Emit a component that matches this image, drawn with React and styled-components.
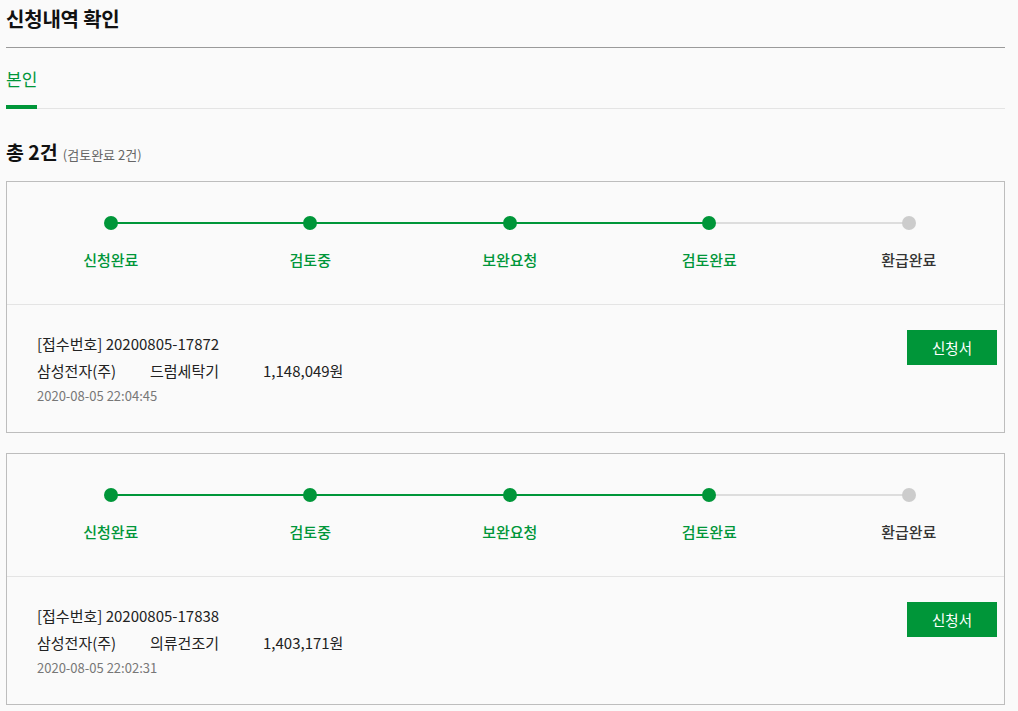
import React from "react";
import styled, { createGlobalStyle } from "styled-components";

const GREEN = "#009639";

const Global = createGlobalStyle`
  html, body {
    margin: 0;
    padding: 0;
    background: #fafafa;
  }
  body {
    font-family: "Noto Sans CJK KR", "Noto Sans", sans-serif;
    color: #222;
  }
  * { box-sizing: border-box; }
`;

const Page = styled.div`
  padding: 0 13px 0 6px;
  width: 1018px;
`;

const Title = styled.h2`
  margin: 0;
  font-size: 20px;
  font-weight: 700;
  line-height: 38px;
  padding-bottom: 9px;
  border-bottom: 1px solid #9a9a9a;
  color: #111;
  letter-spacing: -0.2px;
`;

const Tabs = styled.div`
  display: flex;
  border-bottom: 1px solid #e4e4e4;
`;

const Tab = styled.div`
  font-size: 17px;
  line-height: 28px;
  padding: 17px 0 12px;
  color: ${(p) => (p.$active ? GREEN : "#333")};
  border-bottom: 4px solid ${(p) => (p.$active ? GREEN : "transparent")};
  margin-bottom: -1px;
`;

const Summary = styled.div`
  padding: 28px 0 11px;
  line-height: 30px;
  display: flex;
  align-items: baseline;
  gap: 5px;
`;

const Total = styled.span`
  font-size: 19.5px;
  font-weight: 700;
  color: #111;
`;

const Sub = styled.span`
  font-size: 13px;
  color: #666;
`;

const List = styled.div`
  display: flex;
  flex-direction: column;
  gap: 20px;
`;

const Card = styled.div`
  border: 1px solid #bdbdbd;
  background: #fafafa;
`;

const Stepper = styled.ol`
  list-style: none;
  margin: 0;
  padding: 34px 0 0 4px;
  height: 123px;
  display: grid;
  grid-template-columns: repeat(5, 199.5px);
  border-bottom: 1px solid #e4e4e4;
`;

const Step = styled.li`
  position: relative;
  display: flex;
  flex-direction: column;
  align-items: center;

  &::before {
    content: "";
    display: ${(p) => (p.$first ? "none" : "block")};
    position: absolute;
    top: 6px;
    left: -50%;
    right: 50%;
    height: 2px;
    background: ${(p) => (p.$lineDone ? GREEN : "#dddddd")};
  }
`;

const Dot = styled.span`
  position: relative;
  z-index: 1;
  width: 14px;
  height: 14px;
  border-radius: 50%;
  background: ${(p) => (p.$done ? GREEN : "#cccccc")};
`;

const StepLabel = styled.span`
  margin-top: 19px;
  font-size: 15px;
  font-weight: 500;
  line-height: 22px;
  color: ${(p) => (p.$done ? GREEN : "#333")};
`;

const Body = styled.div`
  display: flex;
  justify-content: space-between;
  align-items: flex-start;
  padding: 25px 7px 24px 30px;
`;

const Info = styled.div`
  display: flex;
  flex-direction: column;
`;

const Line = styled.div`
  font-size: 15px;
  line-height: 27px;
  color: #222;
  display: flex;
`;

const Col = styled.span`
  width: 113px;
  flex: none;
`;

const DateText = styled.div`
  font-size: 13px;
  line-height: 24px;
  color: #777;
`;

const Button = styled.button`
  width: 90px;
  height: 35px;
  border: 0;
  background: ${GREEN};
  color: #fff;
  font-family: inherit;
  font-size: 14.5px;
  cursor: pointer;
  padding: 0;
`;

const STEPS = ["신청완료", "검토중", "보완요청", "검토완료", "환급완료"];

const items = [
  {
    no: "20200805-17872",
    company: "삼성전자(주)",
    product: "드럼세탁기",
    amount: "1,148,049원",
    date: "2020-08-05 22:04:45",
    current: 3,
  },
  {
    no: "20200805-17838",
    company: "삼성전자(주)",
    product: "의류건조기",
    amount: "1,403,171원",
    date: "2020-08-05 22:02:31",
    current: 3,
  },
];

function ProgressSteps({ current }) {
  return (
    <Stepper>
      {STEPS.map((s, i) => (
        <Step key={s} $first={i === 0} $lineDone={i <= current}>
          <Dot $done={i <= current} />
          <StepLabel $done={i <= current}>{s}</StepLabel>
        </Step>
      ))}
    </Stepper>
  );
}

export default function App() {
  return (
    <Page>
      <Global />
      <Title>신청내역 확인</Title>
      <Tabs>
        <Tab $active>본인</Tab>
      </Tabs>
      <Summary>
        <Total>총 2건</Total>
        <Sub>(검토완료 2건)</Sub>
      </Summary>
      <List>
        {items.map((it) => (
          <Card key={it.no}>
            <ProgressSteps current={it.current} />
            <Body>
              <Info>
                <Line>[접수번호] {it.no}</Line>
                <Line>
                  <Col>{it.company}</Col>
                  <Col>{it.product}</Col>
                  <span>{it.amount}</span>
                </Line>
                <DateText>{it.date}</DateText>
              </Info>
              <Button>신청서</Button>
            </Body>
          </Card>
        ))}
      </List>
    </Page>
  );
}
